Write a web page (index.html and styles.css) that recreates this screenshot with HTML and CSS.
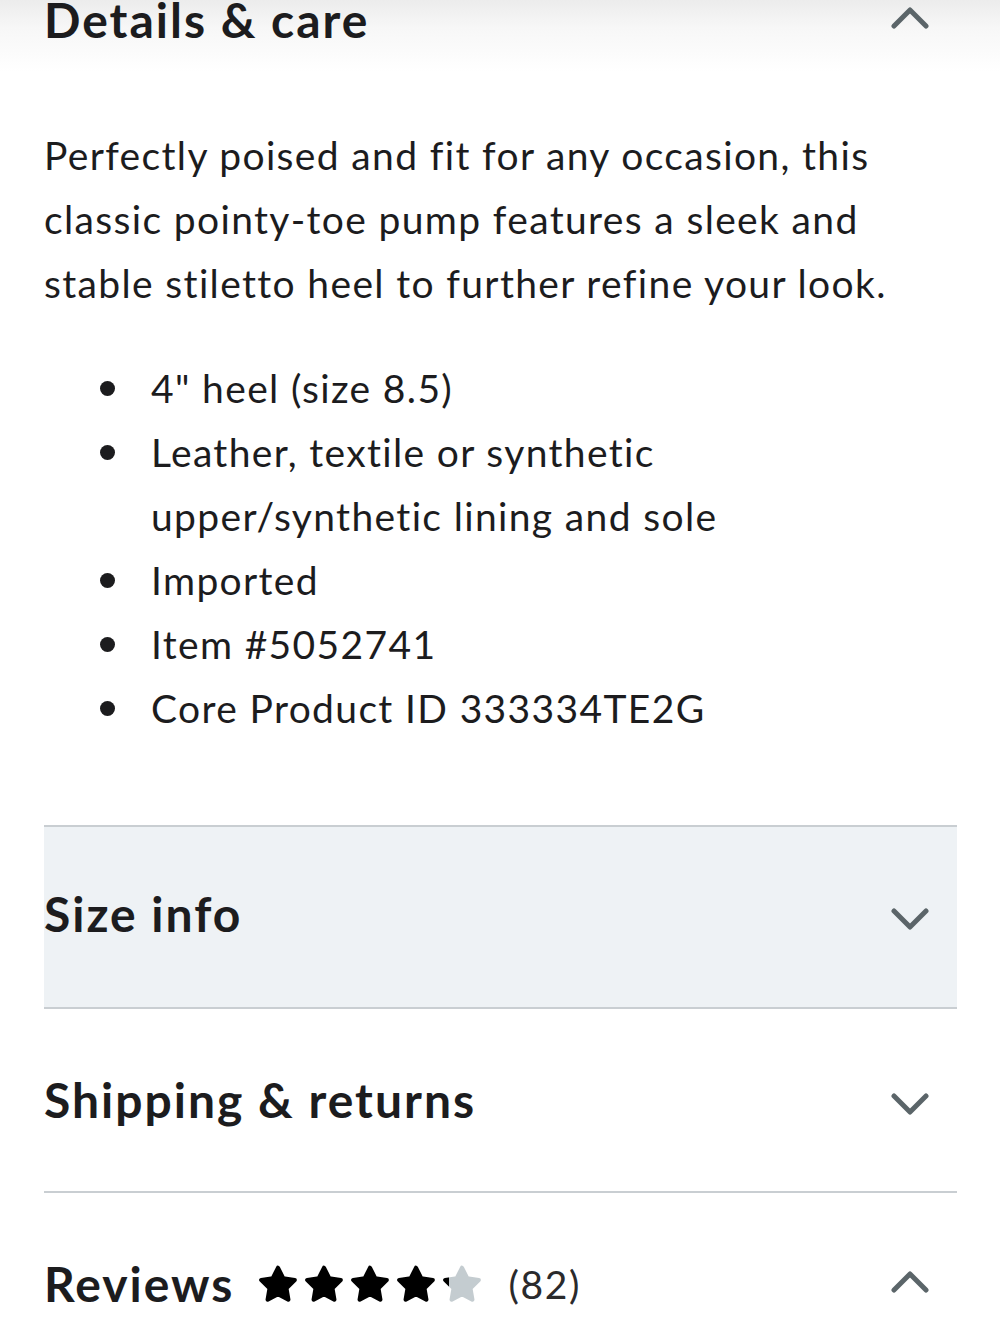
FILE: index.html
```html
<!DOCTYPE html>
<html lang="en">
<head>
<meta charset="utf-8">
<title>Product details</title>
<link rel="stylesheet" href="styles.css">
</head>
<body>
<main class="page">
  <section class="panel panel-open">
    <div class="panel-head">
      <h2 class="panel-title">Details &amp; care</h2>
      <svg class="chev chev-top" viewBox="0 0 38 22" aria-hidden="true"><path d="M3 19 L19 3 L35 19"/></svg>
    </div>
    <div class="panel-body">
      <p class="desc">Perfectly poised and fit for any occasion, this classic pointy-toe pump features a sleek and stable stiletto heel to further refine your look.</p>
      <ul class="facts">
        <li>4" heel (size 8.5)</li>
        <li>Leather, textile or synthetic upper/synthetic lining and sole</li>
        <li>Imported</li>
        <li>Item #5052741</li>
        <li>Core Product ID 333334TE2G</li>
      </ul>
    </div>
  </section>

  <section class="panel panel-row panel-hover">
    <h2 class="panel-title">Size info</h2>
    <svg class="chev chev-down" viewBox="0 0 38 22" aria-hidden="true"><path d="M3 3 L19 19 L35 3"/></svg>
  </section>

  <section class="panel panel-row panel-ship">
    <h2 class="panel-title">Shipping &amp; returns</h2>
    <svg class="chev chev-down" viewBox="0 0 38 22" aria-hidden="true"><path d="M3 3 L19 19 L35 3"/></svg>
  </section>

  <section class="panel panel-row panel-reviews">
    <div class="reviews">
      <h2 class="panel-title">Reviews</h2>
      <div class="stars" aria-label="4.1 out of 5 stars">
        <svg class="star" viewBox="1.2 1.2 21.6 21"><path class="on" d="M12 2.5L14.94 8.45L21.51 9.41L16.76 14.05L17.88 20.59L12 17.5L6.12 20.59L7.24 14.05L2.49 9.41L9.06 8.45Z"/></svg>
        <svg class="star" viewBox="1.2 1.2 21.6 21"><path class="on" d="M12 2.5L14.94 8.45L21.51 9.41L16.76 14.05L17.88 20.59L12 17.5L6.12 20.59L7.24 14.05L2.49 9.41L9.06 8.45Z"/></svg>
        <svg class="star" viewBox="1.2 1.2 21.6 21"><path class="on" d="M12 2.5L14.94 8.45L21.51 9.41L16.76 14.05L17.88 20.59L12 17.5L6.12 20.59L7.24 14.05L2.49 9.41L9.06 8.45Z"/></svg>
        <svg class="star" viewBox="1.2 1.2 21.6 21"><path class="on" d="M12 2.5L14.94 8.45L21.51 9.41L16.76 14.05L17.88 20.59L12 17.5L6.12 20.59L7.24 14.05L2.49 9.41L9.06 8.45Z"/></svg>
        <svg class="star" viewBox="1.2 1.2 21.6 21">
          <defs>
            <linearGradient id="partial" gradientUnits="userSpaceOnUse" x1="1.2" x2="22.8" y1="0" y2="0">
              <stop offset="0.17" stop-color="#000"/>
              <stop offset="0.17" stop-color="#c4ccd0"/>
            </linearGradient>
          </defs>
          <path class="part" d="M12 2.5L14.94 8.45L21.51 9.41L16.76 14.05L17.88 20.59L12 17.5L6.12 20.59L7.24 14.05L2.49 9.41L9.06 8.45Z"/>
        </svg>
      </div>
      <span class="count">(82)</span>
    </div>
    <svg class="chev chev-up" viewBox="0 0 38 22" aria-hidden="true"><path d="M3 19 L19 3 L35 19"/></svg>
  </section>
</main>
</body>
</html>
```

FILE: styles.css
```css
* {
  box-sizing: border-box;
}

html, body {
  margin: 0;
  padding: 0;
  background: #fff;
}

body {
  font-family: Lato, "Open Sans", sans-serif;
  color: #1c1c1e;
  overflow: hidden;
}

.page {
  padding: 0 43px 0 44px;
  background: linear-gradient(#ececec 0, #f7f7f7 28px, #fff 72px);
}

.panel-title {
  margin: 0;
  font-size: 48px;
  font-weight: 700;
  line-height: 40px;
  letter-spacing: 2px;
}

.chev {
  width: 38px;
  height: 22px;
  flex: none;
  margin-right: 28px;
}

.chev path {
  fill: none;
  stroke: #5b6569;
  stroke-width: 5;
  stroke-linecap: round;
  stroke-linejoin: round;
}

/* Expanded panel */
.panel-head {
  display: flex;
  align-items: flex-start;
  justify-content: space-between;
}

.chev-top {
  margin-top: 7px;
}

.panel-body {
  padding-top: 83px;
  padding-bottom: 85px;
  font-size: 39px;
  line-height: 64px;
  letter-spacing: 1.35px;
}

.desc {
  margin: 0;
  padding-right: 40px;
}

.facts {
  list-style: none;
  margin: 41px 0 0;
  padding: 0 150px 0 0;
}

.facts li {
  position: relative;
  padding-left: 107px;
}

.facts li::before {
  content: "";
  position: absolute;
  left: 56px;
  top: 25px;
  width: 15px;
  height: 15px;
  border-radius: 50%;
  background: #1c1c1e;
}

/* Collapsed panels */
.panel-row {
  display: flex;
  align-items: center;
  justify-content: space-between;
  height: 184px;
  border-top: 2px solid #c9ced2;
}

.panel-hover {
  background: #eef2f5;
  border-bottom: 2px solid #c9ced2;
}

.panel-hover .panel-title {
  margin-top: -6px;
}

.chev-down {
  margin-top: 4px;
}

.panel-ship {
  border-top: none;
  height: 182px;
}

.panel-ship .chev-down {
  margin-top: 8px;
}

.panel-reviews {
  border-top: 2px solid #c9ced2;
}

.panel-reviews .chev-up {
  margin-top: -4px;
}

.reviews {
  display: flex;
  align-items: center;
}

.stars {
  display: flex;
  gap: 8px;
  margin-left: 25px;
}

.star {
  width: 38px;
  height: 38px;
}

.star path {
  stroke-width: 2.4;
  stroke-linejoin: round;
}

.star .on {
  fill: #000;
  stroke: #000;
}

.star .part {
  fill: url(#partial);
  stroke: url(#partial);
}

.count {
  margin-left: 27px;
  font-size: 39px;
  letter-spacing: 1.6px;
  color: #2a2a2c;
}
```
